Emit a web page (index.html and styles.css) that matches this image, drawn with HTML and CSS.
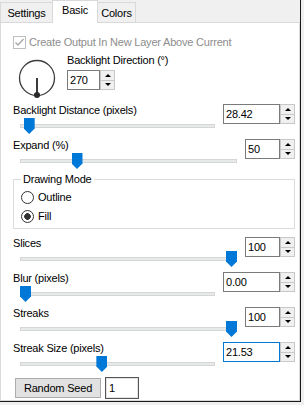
FILE: index.html
```html
<!DOCTYPE html>
<html lang="en">

<head>
    <meta charset="UTF-8">
    <title>Basic</title>
    <link rel="stylesheet" href="styles.css">
</head>

<body>

    <div class="window">
        <div class="tabs">
            <div class="tab tab-settings">Settings</div>
            <div class="tab tab-basic active">Basic</div>
            <div class="tab tab-colors">Colors</div>
        </div>

        <div class="page">
            <div class="check disabled">
                <span class="box"><svg viewBox="0 0 11 11"><path d="M1.5 5.5l2.5 2.5 5.5-6"></path></svg></span>
                Create Output In New Layer Above Current
            </div>

            <div class="direction">
                <svg class="dial" width="40" height="44" viewBox="0 0 40 44">
                    <circle cx="20" cy="24" r="17.5"></circle>
                    <line x1="20" y1="24" x2="20" y2="41"></line>
                    <circle class="knob" cx="20" cy="41" r="3"></circle>
                </svg>
                <div class="dir-ctrl">
                    <div class="label">Backlight Direction (°)</div>
                    <div class="spin tiny"><span class="val">270</span><span class="arrows"><i class="up"></i><i class="down"></i></span></div>
                </div>
            </div>

            <div class="field first">
                <div class="label">Backlight Distance (pixels)</div>
                <div class="spin wide"><span class="val">28.42</span><span class="arrows"><i class="up"></i><i class="down"></i></span></div>
                <div class="slider"><div class="track"></div><div class="thumb" style="--v: .02"></div></div>
            </div>

            <div class="field">
                <div class="label">Expand (%)</div>
                <div class="spin narrow"><span class="val">50</span><span class="arrows"><i class="up"></i><i class="down"></i></span></div>
                <div class="slider"><div class="track"></div><div class="thumb" style="--v: .25"></div></div>
            </div>

            <fieldset class="group">
                <legend>Drawing Mode</legend>
                <div class="radio"><span class="dot"></span>Outline</div>
                <div class="radio"><span class="dot on"></span>Fill</div>
            </fieldset>

            <div class="field">
                <div class="label">Slices</div>
                <div class="spin narrow"><span class="val">100</span><span class="arrows"><i class="up"></i><i class="down"></i></span></div>
                <div class="slider"><div class="track"></div><div class="thumb" style="--v: 1"></div></div>
            </div>

            <div class="field">
                <div class="label">Blur (pixels)</div>
                <div class="spin wide"><span class="val">0.00</span><span class="arrows"><i class="up"></i><i class="down"></i></span></div>
                <div class="slider"><div class="track"></div><div class="thumb" style="--v: 0"></div></div>
            </div>

            <div class="field">
                <div class="label">Streaks</div>
                <div class="spin narrow"><span class="val">100</span><span class="arrows"><i class="up"></i><i class="down"></i></span></div>
                <div class="slider"><div class="track"></div><div class="thumb" style="--v: 1"></div></div>
            </div>

            <div class="field">
                <div class="label">Streak Size (pixels)</div>
                <div class="spin wide focus"><span class="val">21.53</span><span class="arrows"><i class="up"></i><i class="down"></i></span></div>
                <div class="slider"><div class="track"></div><div class="thumb" style="--v: .415"></div></div>
            </div>

            <div class="seed">
                <div class="button">Random Seed</div>
                <div class="seed-box">1</div>
            </div>
        </div>
    </div>

</body>

</html>
```

FILE: styles.css
```css
body {
    margin: 0;
    background-color: #f0f0f0;
    font-family: "Liberation Sans", Arial, sans-serif;
    font-size: 11px;
    line-height: 13px;
    letter-spacing: -0.2px;
    color: #000;
}

.window {
    width: 300px;
    height: 401px;
    border-right: 1px solid #1a1a1a;
    border-bottom: 1px solid #1a1a1a;
    display: flex;
    flex-direction: column;
}

/* tabs */

.tabs {
    display: flex;
    align-items: flex-end;
    height: 22px;
    position: relative;
    z-index: 1;
}

.tab {
    height: 20px;
    box-sizing: border-box;
    border: 1px solid #d9d9d9;
    border-bottom: none;
    background-color: #f0f0f0;
    text-align: center;
    line-height: 18px;
    padding-top: 1px;
}

.tab-settings {
    width: 53px;
}

.tab-basic {
    width: 46px;
    margin-left: -1px;
}

.tab-colors {
    width: 39px;
    margin-left: -1px;
}

.tab.active {
    height: 23px;
    background-color: #fff;
    margin-bottom: -1px;
    padding-top: 0;
    line-height: 19px;
}

/* page */

.page {
    flex: 1;
    background-color: #fff;
    border: 1px solid #d9d9d9;
    padding: 13px 4px 0 12px;
}

.check {
    display: flex;
    align-items: center;
    gap: 3px;
    height: 13px;
}

.check.disabled {
    color: #8d8d8d;
}

.check .box {
    width: 13px;
    height: 13px;
    box-sizing: border-box;
    border: 1px solid #bfbfbf;
    background-color: #fff;
}

.check svg {
    display: block;
    width: 11px;
    height: 11px;
}

.check path {
    fill: none;
    stroke: #a8a8a8;
    stroke-width: 1.4;
}

.direction {
    display: flex;
    margin-top: 5px;
}

.dial {
    margin-left: 4px;
    margin-right: 10px;
}

.dial circle {
    fill: none;
    stroke: #3c3c3c;
    stroke-width: 1.3;
}

.dial line {
    stroke: #3c3c3c;
    stroke-width: 2;
}

.dial .knob {
    fill: #2a2a2a;
    stroke: none;
}

.dir-ctrl .spin {
    margin-top: 3px;
}

/* numeric up/down */

.spin {
    display: flex;
    height: 20px;
}

.spin .val {
    box-sizing: border-box;
    border: 1px solid #7a7a7a;
    background-color: #fff;
    padding-left: 2px;
    line-height: 18px;
}

.spin.focus .val {
    border-color: #0078d7;
}

.spin.wide .val {
    width: 57px;
}

.spin.narrow .val {
    width: 35px;
}

.spin.tiny .val {
    width: 33px;
}

.arrows {
    display: flex;
    flex-direction: column;
    width: 15px;
    box-sizing: border-box;
    border: 1px solid #c8c8c8;
    background-color: #f0f0f0;
}

.arrows i {
    flex: 1;
    display: flex;
    align-items: center;
    justify-content: center;
}

.arrows .up {
    border-bottom: 1px solid #c8c8c8;
}

.arrows .up::after,
.arrows .down::after {
    content: "";
    border-left: 3px solid transparent;
    border-right: 3px solid transparent;
}

.arrows .up::after {
    border-bottom: 3px solid #000;
}

.arrows .down::after {
    border-top: 3px solid #000;
}

/* slider rows */

.field {
    display: grid;
    grid-template-columns: 1fr auto;
    column-gap: 8px;
    margin-top: 5px;
}

.field.first {
    margin-top: 6px;
}

.field .label {
    grid-row: 1;
    grid-column: 1;
}

.field .spin {
    grid-row: 1 / span 2;
    grid-column: 2;
}

.slider {
    grid-row: 2;
    grid-column: 1;
    position: relative;
    height: 17px;
    margin-left: 7px;
}

.track {
    margin-top: 7px;
    height: 4px;
    box-sizing: border-box;
    border: 1px solid #d6d6d6;
    background-color: #e7eaea;
}

.thumb {
    position: absolute;
    top: 1px;
    left: calc((100% - 11px) * var(--v));
    width: 11px;
    height: 16px;
    background-color: #0078d7;
    clip-path: polygon(0 0, 100% 0, 100% 66%, 50% 100%, 0 66%);
}

/* group box */

.group {
    margin: 4px 0 8px;
    padding: 2px 7px 2px;
    border: 1px solid #dcdcdc;
}

.group legend {
    padding: 0 2px;
}

.radio {
    display: flex;
    align-items: center;
    gap: 4px;
    height: 19px;
}

.dot {
    width: 13px;
    height: 13px;
    box-sizing: border-box;
    border: 1px solid #333;
    border-radius: 50%;
    background-color: #fff;
}

.dot.on {
    background: radial-gradient(circle, #333 0 3px, #fff 3.6px);
}

/* seed */

.seed {
    display: flex;
    align-items: center;
    gap: 4px;
    margin-top: 5px;
    padding-left: 2px;
}

.button {
    width: 86px;
    height: 20px;
    box-sizing: border-box;
    border: 1px solid #adadad;
    background-color: #e1e1e1;
    text-align: center;
    line-height: 18px;
}

.seed-box {
    width: 34px;
    height: 22px;
    box-sizing: border-box;
    border: 1px solid #555;
    box-shadow: inset 0 0 0 1px #e3e3e3;
    padding-left: 3px;
    line-height: 20px;
}
```
